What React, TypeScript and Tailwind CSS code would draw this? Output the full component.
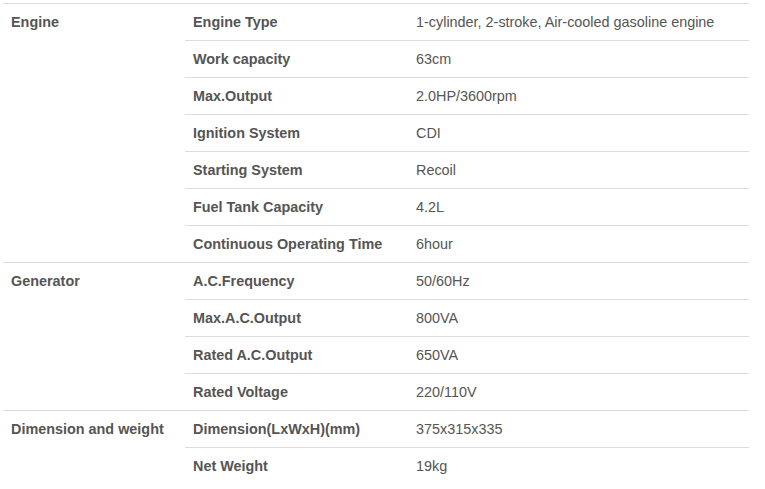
import React from 'react';

const groups: { name: string; rows: [string, string][] }[] = [
    {
        name: 'Engine',
        rows: [
            ['Engine Type', '1-cylinder, 2-stroke, Air-cooled gasoline engine'],
            ['Work capacity', '63cm'],
            ['Max.Output', '2.0HP/3600rpm'],
            ['Ignition System', 'CDI'],
            ['Starting System', 'Recoil'],
            ['Fuel Tank Capacity', '4.2L'],
            ['Continuous Operating Time', '6hour'],
        ],
    },
    {
        name: 'Generator',
        rows: [
            ['A.C.Frequency', '50/60Hz'],
            ['Max.A.C.Output', '800VA'],
            ['Rated A.C.Output', '650VA'],
            ['Rated Voltage', '220/110V'],
        ],
    },
    {
        name: 'Dimension and weight',
        rows: [
            ['Dimension(LxWxH)(mm)', '375x315x335'],
            ['Net Weight', '19kg'],
        ],
    },
];

export default function App() {
    return (
        <div className="min-h-screen bg-white pt-[3px] pl-[3px] font-['Liberation_Sans',Arial,sans-serif] text-[14.4px] text-[#555]">
            <table className="w-[746px] border-collapse table-fixed">
                <colgroup>
                    <col className="w-[182px]" />
                    <col className="w-[223px]" />
                    <col />
                </colgroup>
                <tbody>
                    {groups.map(group =>
                        group.rows.map(([label, value], i) => (
                            <tr key={group.name + label}>
                                {i === 0 && (
                                    <td
                                        rowSpan={group.rows.length}
                                        className="border-t border-[#ddd] px-2 py-2 align-top font-bold leading-5"
                                    >
                                        {group.name}
                                    </td>
                                )}
                                <td className="border-t border-[#ddd] px-2 py-2 font-bold leading-5">{label}</td>
                                <td className="border-t border-[#ddd] px-2 py-2 leading-5">{value}</td>
                            </tr>
                        ))
                    )}
                </tbody>
            </table>
        </div>
    );
}
